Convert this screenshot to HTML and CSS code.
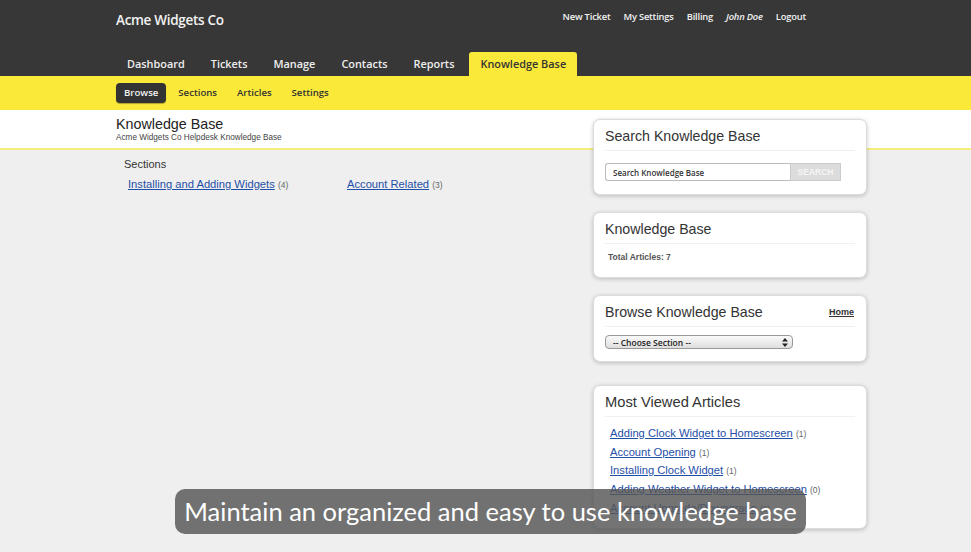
FILE: index.html
```html
<!DOCTYPE html>
<html lang="en">
<head>
    <meta charset="UTF-8">
    <meta name="viewport" content="width=device-width, initial-scale=1.0">
    <title>Knowledge Base - Acme Widgets Co</title>
    <link rel="stylesheet" href="styles.css">
</head>
<body>
    <header class="topbar">
        <div class="wrap">
            <div class="top-row">
                <a href="#" class="brand">Acme Widgets Co</a>
                <div class="user-links">
                    <a href="#">New Ticket</a>
                    <a href="#">My Settings</a>
                    <a href="#">Billing</a>
                    <a href="#" class="user-name">John Doe</a>
                    <a href="#">Logout</a>
                </div>
            </div>
            <nav class="tabs">
                <a href="#">Dashboard</a>
                <a href="#">Tickets</a>
                <a href="#">Manage</a>
                <a href="#">Contacts</a>
                <a href="#">Reports</a>
                <a href="#" class="active">Knowledge Base</a>
            </nav>
        </div>
    </header>

    <nav class="subnav">
        <div class="wrap">
            <a href="#" class="active">Browse</a>
            <a href="#">Sections</a>
            <a href="#">Articles</a>
            <a href="#">Settings</a>
        </div>
    </nav>

    <main class="page">
        <div class="wrap layout">
            <section class="main-col">
                <div class="page-title">
                    <h1>Knowledge Base</h1>
                    <p>Acme Widgets Co Helpdesk Knowledge Base</p>
                </div>
                <div class="sections">
                    <h2>Sections</h2>
                    <ul class="section-list">
                        <li><a href="#">Installing and Adding Widgets</a> <span class="count">(4)</span></li>
                        <li><a href="#">Account Related</a> <span class="count">(3)</span></li>
                    </ul>
                </div>
            </section>

            <aside class="sidebar">
                <div class="card">
                    <h3>Search Knowledge Base</h3>
                    <form class="search-form">
                        <input type="text" value="Search Knowledge Base">
                        <button type="button">SEARCH</button>
                    </form>
                </div>

                <div class="card">
                    <h3>Knowledge Base</h3>
                    <p class="total">Total Articles: 7</p>
                </div>

                <div class="card card-browse">
                    <h3>Browse Knowledge Base <a href="#" class="home-link">Home</a></h3>
                    <div class="select">
                        <span>-- Choose Section --</span>
                        <svg width="6" height="9" viewBox="0 0 6 9"><path d="M3 0 L6 3.5 H0 Z M3 9 L0 5.5 H6 Z" fill="#222"/></svg>
                    </div>
                </div>

                <div class="card card-popular">
                    <h3>Most Viewed Articles</h3>
                    <ul class="article-list">
                        <li><a href="#">Adding Clock Widget to Homescreen</a> <span class="count">(1)</span></li>
                        <li><a href="#">Account Opening</a> <span class="count">(1)</span></li>
                        <li><a href="#">Installing Clock Widget</a> <span class="count">(1)</span></li>
                        <li><a href="#">Adding Weather Widget to Homescreen</a> <span class="count">(0)</span></li>
                        <li><a href="#">Account Upgrade/Downgrade</a> <span class="count">(0)</span></li>
                    </ul>
                </div>
            </aside>
        </div>
    </main>

    <div class="caption">Maintain an organized and easy to use knowledge base</div>
</body>
</html>
```

FILE: styles.css
```css
* {
    margin: 0;
    padding: 0;
    box-sizing: border-box;
}

body {
    background-color: #efefef;
    font-family: "Liberation Sans", Arial, sans-serif;
    color: #333;
    height: 552px;
    overflow: hidden;
}

a {
    text-decoration: none;
}

ul {
    list-style: none;
}

.wrap {
    width: 751px;
    margin-left: 116px;
}

/* top dark bar */
.topbar {
    background: #373737;
    height: 76px;
    font-family: "Open Sans", sans-serif;
}

.top-row {
    display: flex;
    justify-content: space-between;
    align-items: flex-start;
    height: 52px;
}

.brand {
    color: #f2f2f2;
    font-size: 13.5px;
    font-weight: 600;
    margin-top: 11px;
    letter-spacing: -0.3px;
}

.user-links {
    display: flex;
    gap: 13px;
    margin-top: 10px;
    margin-right: 61px;
}

.user-links a {
    color: #f2f2f2;
    font-size: 9.4px;
    font-weight: 600;
    letter-spacing: -0.2px;
}

.user-links .user-name {
    font-style: italic;
}

.tabs {
    display: flex;
    gap: 4px;
    height: 24px;
}

.tabs a {
    display: flex;
    align-items: center;
    padding: 0 11px 2px;
    color: #eee;
    font-size: 10.9px;
    font-weight: 600;
    border-radius: 3px 3px 0 0;
}

.tabs a.active {
    background: #fbe93a;
    color: #333;
}

/* yellow sub navigation */
.subnav {
    background: #fbe93a;
    height: 34px;
    font-family: "Open Sans", sans-serif;
}

.subnav .wrap {
    display: flex;
    align-items: center;
    gap: 4px;
    height: 34px;
}

.subnav a {
    padding: 0 8px;
    height: 20px;
    line-height: 20px;
    color: #333;
    font-size: 9.6px;
    font-weight: 600;
    border-radius: 4px;
}

.subnav a.active {
    background: #333;
    color: #f2f2f2;
    box-shadow: 0 1px 1px rgba(0, 0, 0, 0.3);
}

/* page area */
.page {
    background: linear-gradient(to bottom, #fff 0, #fff 38px, #f6ec7c 38px, #f6ec7c 40px, #efefef 40px);
}

.layout {
    display: flex;
    justify-content: space-between;
}

.main-col {
    width: 460px;
}

.page-title {
    height: 40px;
    padding-top: 6px;
}

.page-title h1 {
    font-size: 14.3px;
    font-weight: normal;
    color: #222;
    line-height: 16px;
}

.page-title p {
    font-size: 8.2px;
    color: #444;
    margin-top: 1px;
}

.sections {
    padding: 8px 8px 0;
}

.sections h2 {
    font-size: 11px;
    font-weight: normal;
    color: #333;
}

.section-list {
    display: flex;
    margin-top: 8px;
    padding-left: 4px;
}

.section-list li {
    width: 219px;
    font-size: 11.2px;
}

.section-list a,
.article-list a {
    color: #1f4fa8;
    text-decoration: underline;
}

.count {
    font-size: 8.5px;
    color: #666;
    line-height: 1;
}

/* sidebar cards */
.sidebar {
    width: 274px;
    padding-top: 9px;
}

.card {
    background: #fff;
    border: 1px solid #dcdcdc;
    border-radius: 7px;
    box-shadow: 0 1px 4px rgba(0, 0, 0, 0.22);
    padding: 8px 11px 13px;
    margin-bottom: 17px;
}

.card h3 {
    display: flex;
    justify-content: space-between;
    align-items: center;
    font-size: 14.2px;
    font-weight: normal;
    color: #333;
    line-height: 16px;
    padding-bottom: 6px;
    border-bottom: 1px solid #f0f0f0;
}

.home-link {
    font-size: 9px;
    font-weight: bold;
    color: #333;
    text-decoration: underline;
    margin-right: 1px;
}

.search-form {
    display: flex;
    margin-top: 12px;
}

.search-form input {
    width: 185px;
    height: 18px;
    border: 1px solid #bbb;
    border-right: none;
    border-radius: 3px 0 0 3px;
    padding: 0 7px;
    font-family: "Open Sans", sans-serif;
    font-size: 8px;
    font-weight: 600;
    color: #333;
}

.search-form button {
    width: 51px;
    height: 18px;
    border: 1px solid #ccc;
    background: #dcdcdc;
    color: #f6f6f6;
    font-family: "Liberation Sans", Arial, sans-serif;
    font-size: 8.5px;
    font-weight: bold;
}

.total {
    font-size: 8.5px;
    font-weight: bold;
    color: #555;
    margin: 8px 0 2px 3px;
}

.select {
    display: flex;
    justify-content: space-between;
    align-items: center;
    width: 188px;
    height: 14px;
    margin-top: 8px;
    padding: 0 4px 0 7px;
    border: 1px solid #999;
    border-radius: 4px;
    background: linear-gradient(to bottom, #fafafa, #dedede);
    font-family: "Open Sans", sans-serif;
    font-size: 8.5px;
    font-weight: 600;
    color: #222;
}

.card-browse {
    margin-bottom: 23px;
    padding-bottom: 12px;
}

.card-popular {
    padding-bottom: 10px;
}

.card-popular h3 {
    font-size: 14.7px;
}

.article-list {
    padding: 7px 0 0 5px;
}

.article-list li {
    font-size: 11.2px;
    line-height: 18.7px;
}

/* video caption overlay */
.caption {
    position: absolute;
    left: 175px;
    top: 489px;
    width: 631px;
    height: 45px;
    border-radius: 10px;
    background: rgba(85, 85, 85, 0.82);
    color: #fff;
    font-family: Lato, sans-serif;
    font-size: 25.5px;
    line-height: 45px;
    text-align: center;
}
```
